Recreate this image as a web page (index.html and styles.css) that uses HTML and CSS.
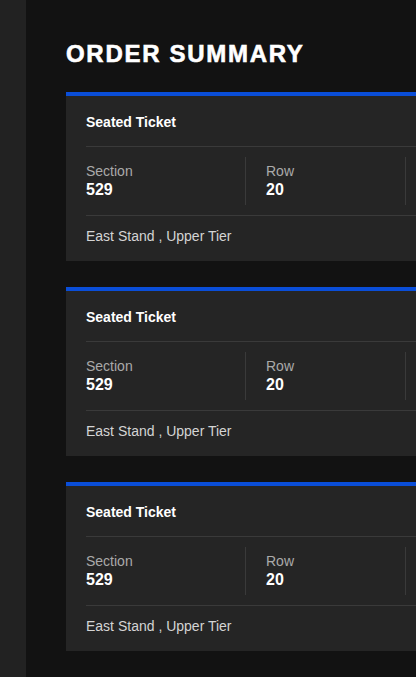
FILE: index.html
```html
<!DOCTYPE html>
<html lang="en">
<head>
<meta charset="utf-8">
<title>Order Summary</title>
<link rel="stylesheet" href="styles.css">
</head>
<body>
<div class="layout">
  <aside class="sidebar"></aside>
  <main class="main">
    <h1 class="title">ORDER SUMMARY</h1>
    <div class="tickets">
      <section class="card">
        <div class="card-head">Seated Ticket</div>
        <div class="card-row">
          <div class="cell"><div class="label">Section</div><div class="value">529</div></div>
          <div class="cell"><div class="label">Row</div><div class="value">20</div></div>
          <div class="cell"></div>
        </div>
        <div class="card-foot">East Stand , Upper Tier</div>
      </section>
      <section class="card">
        <div class="card-head">Seated Ticket</div>
        <div class="card-row">
          <div class="cell"><div class="label">Section</div><div class="value">529</div></div>
          <div class="cell"><div class="label">Row</div><div class="value">20</div></div>
          <div class="cell"></div>
        </div>
        <div class="card-foot">East Stand , Upper Tier</div>
      </section>
      <section class="card">
        <div class="card-head">Seated Ticket</div>
        <div class="card-row">
          <div class="cell"><div class="label">Section</div><div class="value">529</div></div>
          <div class="cell"><div class="label">Row</div><div class="value">20</div></div>
          <div class="cell"></div>
        </div>
        <div class="card-foot">East Stand , Upper Tier</div>
      </section>
    </div>
  </main>
</div>
</body>
</html>
```

FILE: styles.css
```css
html, body {
  margin: 0;
  padding: 0;
  background: #121212;
  overflow: hidden;
}

body {
  font-family: "Liberation Sans", Arial, sans-serif;
  color: #ffffff;
}

.layout {
  display: flex;
  min-height: 100vh;
  width: 100vw;
  overflow: hidden;
}

.sidebar {
  flex: 0 0 26px;
  background: #222222;
}

.main {
  flex: 1;
  min-width: 0;
  padding: 40px 0 0 40px;
}

.title {
  margin: 0 0 24px 0;
  font-size: 24px;
  line-height: 28px;
  font-weight: 700;
  letter-spacing: 1.7px;
  color: #ffffff;
  white-space: nowrap;
  -webkit-text-stroke: 0.6px #ffffff;
}

.tickets {
  display: flex;
  flex-direction: column;
  gap: 26px;
}

.card {
  width: 560px;
  background: #252525;
  border-top: 4px solid #0a4ed8;
  padding: 0 0 0 20px;
  box-sizing: border-box;
}

.card-head {
  padding: 18px 0 16px;
  font-size: 14px;
  line-height: 16px;
  font-weight: 700;
  border-bottom: 1px solid #3a3a3a;
}

.card-row {
  display: flex;
  padding: 10px 0;
  border-bottom: 1px solid #3a3a3a;
}

.cell {
  flex: 0 0 160px;
  min-height: 48px;
  box-sizing: border-box;
  padding: 6px 0 6px 20px;
  border-right: 1px solid #3a3a3a;
}

.cell:first-child {
  padding-left: 0;
}

.label {
  font-size: 14px;
  line-height: 16px;
  color: #aaaaaa;
}

.value {
  margin-top: 2px;
  font-size: 16px;
  line-height: 18px;
  font-weight: 700;
  color: #ffffff;
}

.card-foot {
  padding: 12px 0 17px;
  font-size: 14px;
  line-height: 16px;
  color: #d4d4d4;
}
```
